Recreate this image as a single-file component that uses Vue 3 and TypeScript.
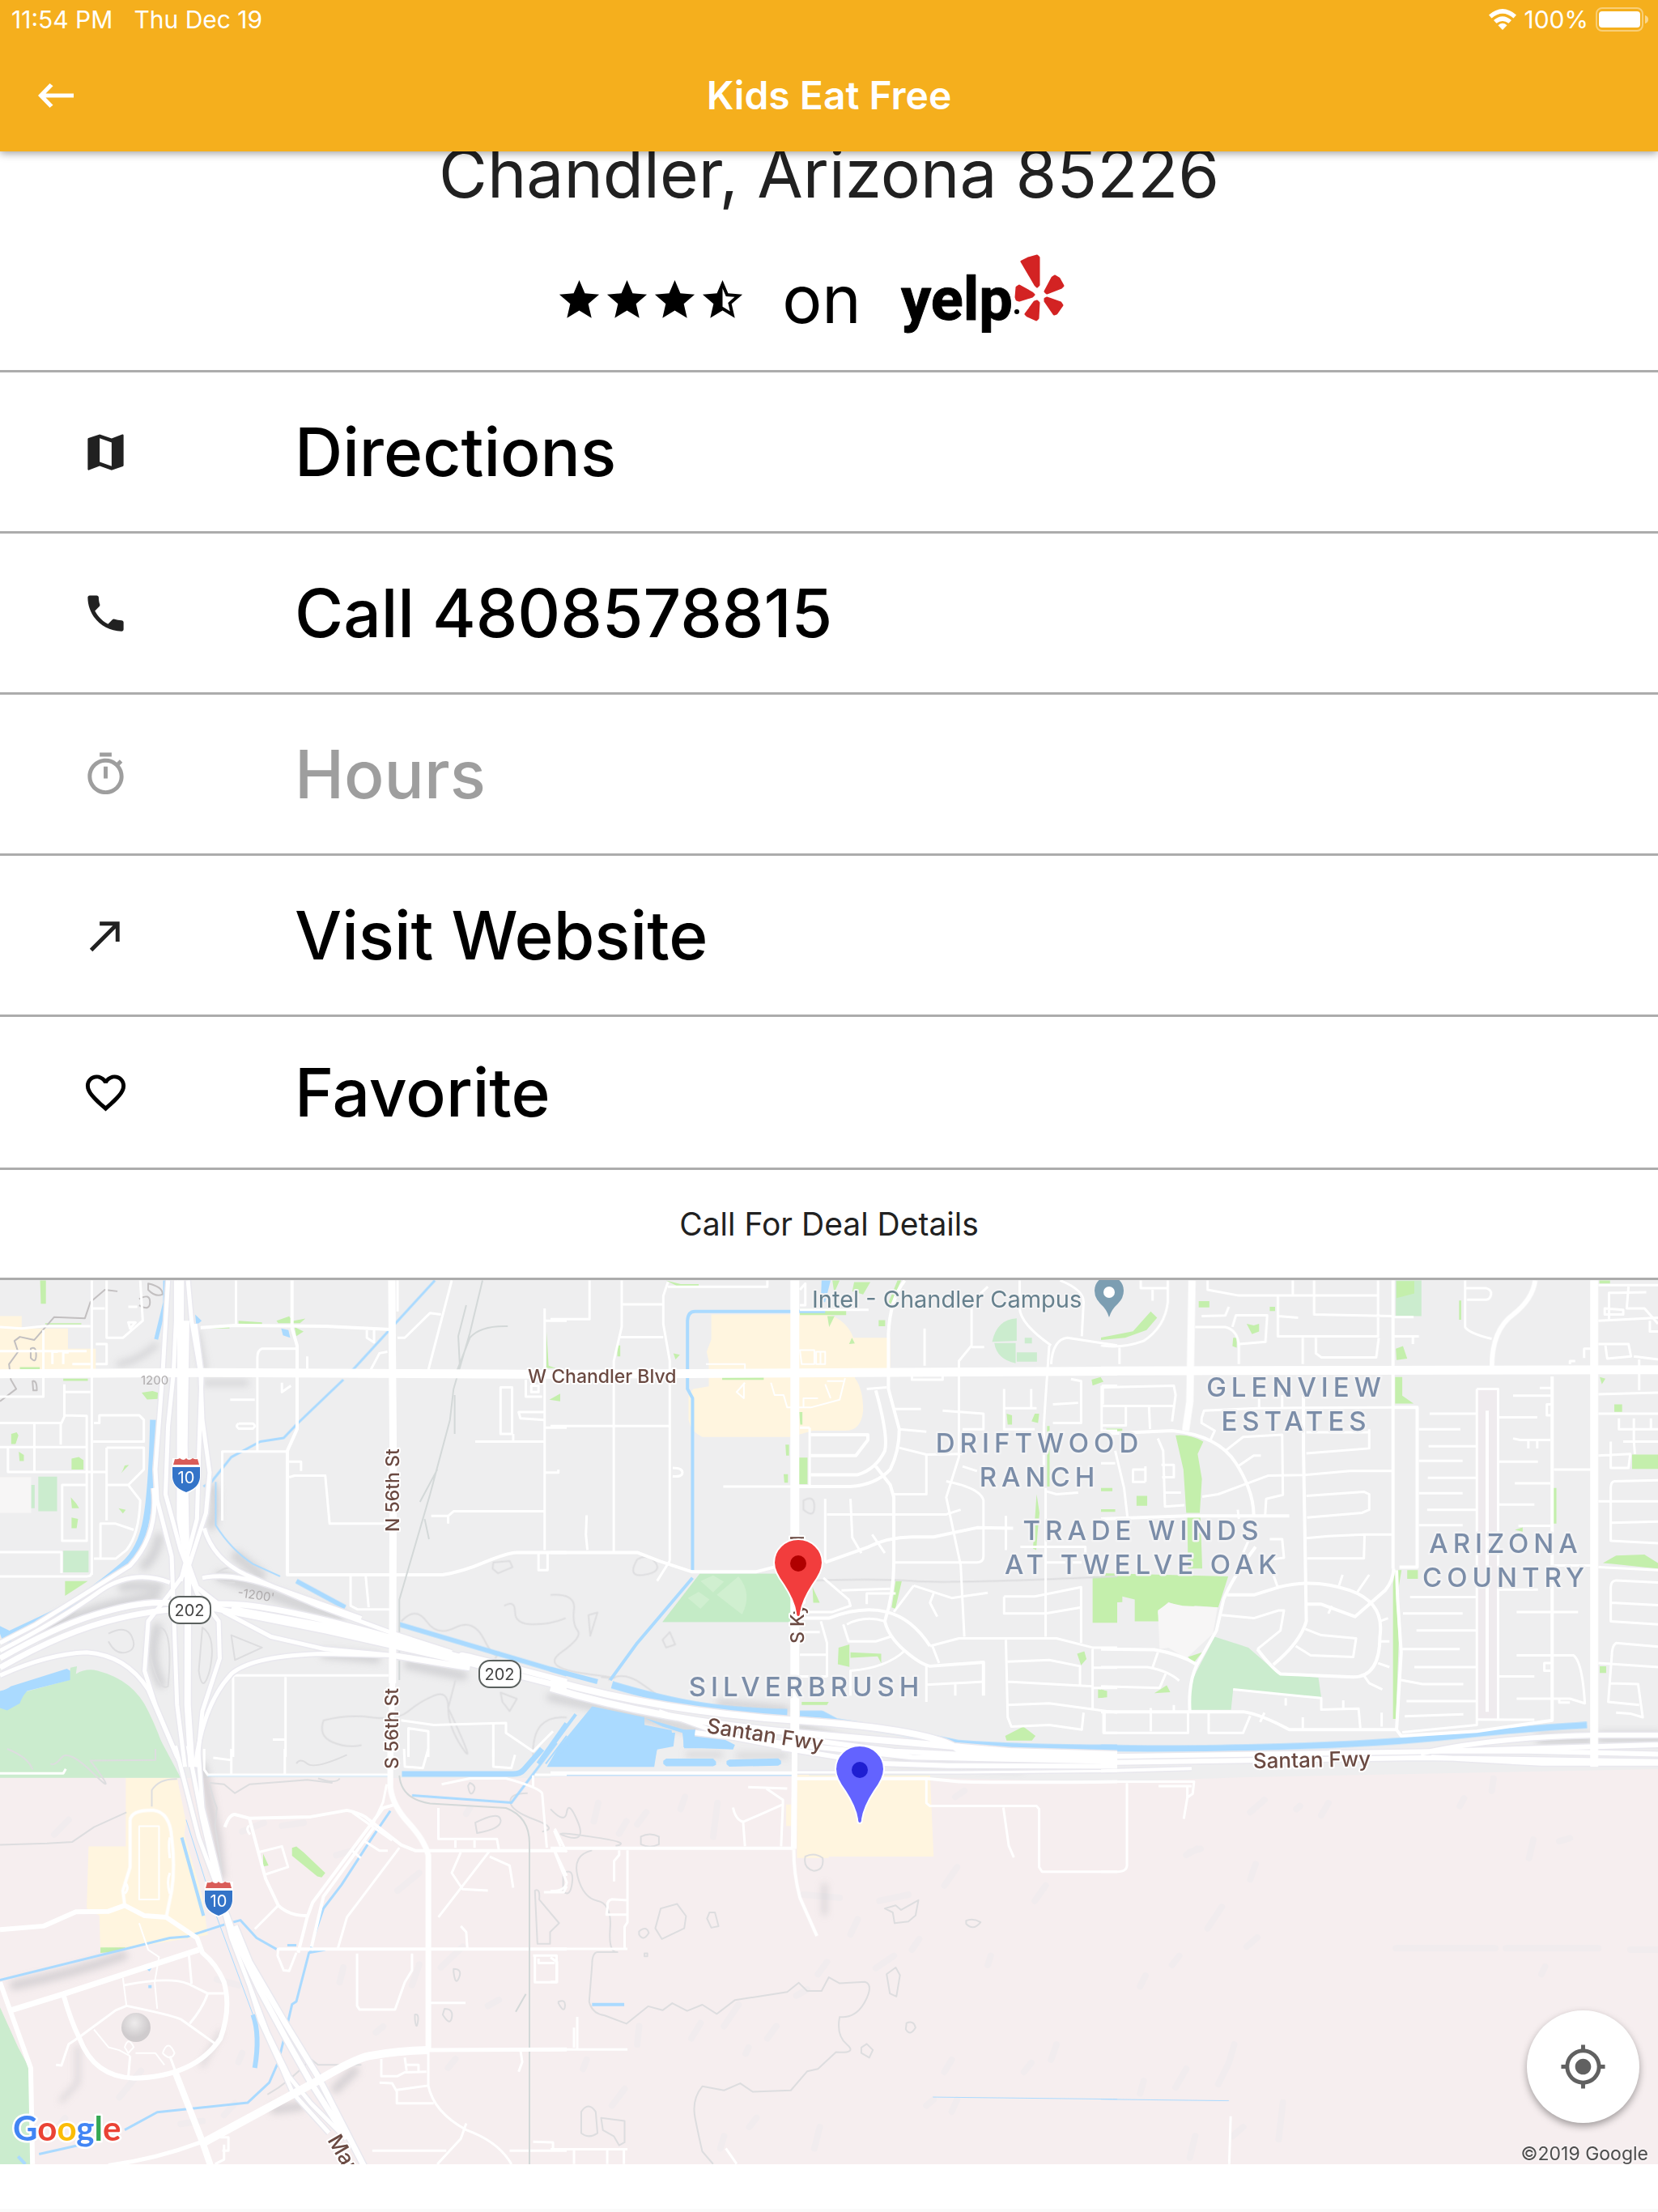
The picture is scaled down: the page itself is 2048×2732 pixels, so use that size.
<script setup lang="ts">
interface Action {
  label: string
  icon: string
  tone?: 'muted' | 'strong'
  short?: boolean
}

type TileKey = 'nw' | 'n' | 'ne' | 'sw' | 's' | 'se'

interface MapShape {
  tile: TileKey
  d: string
}

interface MapLine extends MapShape {
  w: number
}

interface AreaLabel {
  x: number
  y: number
  lines: string[]
}

const star = 'M12 17.27L18.18 21l-1.64-7.03L22 9.24l-7.19-.61L12 2 9.19 8.63 2 9.24l5.46 4.73L5.82 21z'
const halfStar =
  'M22 9.24l-7.19-.62L12 2 9.19 8.63 2 9.24l5.46 4.73L5.82 21 12 17.27 18.18 21l-1.63-7.03L22 9.24zM12 15.4V6.1l1.71 4.04 4.38.38-3.32 2.88 1 4.28L12 15.4z'
const stars = [star, star, star, halfStar]

const actions: Action[] = [
  {
    label: 'Directions',
    icon: 'M20.5 3l-.16.03L15 5.1 9 3 3.36 4.9c-.21.07-.36.25-.36.48V20.5c0 .28.22.5.5.5l.16-.03L9 18.9l6 2.1 5.64-1.9c.21-.07.36-.25.36-.48V3.5c0-.28-.22-.5-.5-.5zM15 19l-6-2.11V5l6 2.11V19z',
  },
  {
    label: 'Call 4808578815',
    icon: 'M6.62 10.79c1.44 2.83 3.76 5.14 6.59 6.59l2.2-2.2c.27-.27.67-.36 1.02-.24 1.12.37 2.33.57 3.57.57.55 0 1 .45 1 1V20c0 .55-.45 1-1 1-9.39 0-17-7.61-17-17 0-.55.45-1 1-1h3.5c.55 0 1 .45 1 1 0 1.25.2 2.45.57 3.57.11.35.03.74-.25 1.02l-2.2 2.2z',
  },
  {
    label: 'Hours',
    tone: 'muted',
    icon: 'M15 1H9v2h6V1zm-4 13h2V8h-2v6zm8.03-6.61l1.42-1.42c-.43-.51-.9-.99-1.41-1.41l-1.42 1.42C16.07 4.74 14.12 4 12 4c-4.97 0-9 4.03-9 9s4.02 9 9 9 9-4.03 9-9c0-2.12-.74-4.07-1.97-5.61zM12 20c-3.87 0-7-3.13-7-7s3.13-7 7-7 7 3.13 7 7-3.13 7-7 7z',
  },
  { label: 'Visit Website', icon: 'M9 5v2h6.59L4 18.59 5.41 20 17 8.41V15h2V5z' },
  {
    label: 'Favorite',
    tone: 'strong',
    short: true,
    icon: 'M16.5 3c-1.74 0-3.41.81-4.5 2.09C10.91 3.81 9.24 3 7.5 3 4.42 3 2 5.42 2 8.5c0 3.78 3.4 6.86 8.55 11.54L12 21.35l1.45-1.32C18.6 15.36 22 12.28 22 8.5 22 5.42 19.58 3 16.5 3zm-4.4 15.55l-.1.1-.1-.1C7.14 14.24 4 11.39 4 8.5 4 6.5 5.5 5 7.5 5c1.54 0 3.04.99 3.57 2.36h1.87C13.46 5.99 14.96 5 16.5 5c2 0 3.5 1.5 3.5 3.5 0 2.89-3.14 5.74-7.9 10.05z',
  },
]

// The map geometry is stored per tile; every tile spans 1568 x 1568 units.
const tiles: Record<TileKey, string> = {
  nw: 'translate(0 -11) scale(.44643 .38265)',
  n: 'translate(680 -11) scale(.44643 .38265)',
  ne: 'translate(1360 -11) scale(.43878 .38265)',
  sw: 'translate(0 579) scale(.44643 .3648)',
  s: 'translate(680 559) scale(.44643 .37755)',
  se: 'translate(1360 559) scale(.43878 .37755)',
}

const campus: MapShape[] = [
  { tile: 'nw', d: 'M0 145H60V185H188V250H265V318H0z' },
  { tile: 'n', d: 'M445 140H770Q820 160 838 215H940V318H842V345Q865 380 865 450Q860 515 815 515H725L665 535H420Q390 520 382 480V400L395 380L438 372V290L432 260 445 220z' },
  { tile: 'sw', d: 'M348 98H490L515 250 510 290 560 500 575 630 278 690 275 565 240 540 245 330H348z' },
  { tile: 's', d: 'M682 132H1050L1060 405H770V410H682zM652 235h14v70h-14z' },
]

const parks: MapShape[] = [
  { tile: 'nw', d: 'M106 663H158V775H106zM175 902H245V972H175zM86 690h10v75h-10z' },
  { tile: 'nw', d: 'M0 1380L190 1320 195 1280 213 1275 210 1300Q240 1280 270 1290Q370 1320 410 1420Q440 1490 460 1568H0z' },
  { tile: 'n', d: 'M413 977H665V1132H310z' },
  { tile: 'n', d: 'M1222 228Q1235 155 1290 152V225zM1228 232H1287V297Q1235 285 1228 232M1290 262h56v30h-56zM1312 215h20v18h-20z' },
  { tile: 'sw', d: 'M0 -40H440L500 98H0zM0 875L50 1010 85 1090V1406H0z' },
  { tile: 'ne', d: 'M320 1180L415 1215 500 1300 612 1312 620 1375 372 1350 366 1416H250Q245 1340 270 1290zM830 30h72v115h-72z' },
]

const greens: MapShape[] = [
  { tile: 'nw', d: 'M111 30h16v75h-14zM392 392l30-5 15 5v20l-30 2zM31 525l15-5 5 10-8 28h-12zM52 583l14 10v20h-12zM198 605l20-5 13 10v30h-33zM335 652l22-27-12 2-5 15zM196 730l15 20 8 15h-20zM198 795l18 5-4 30h-14zM328 765l20 5-8 12zM180 1000H243L180 1048z' },
  { tile: 'nw', d: 'M765 160l35-14 10 15 35-8-15 15h-60zM815 180l25 15-20 15zM1520 415l30-20v25zM660 160l65 5v6l-65-2zM575 180h60v5h-60zM175 347h68v7h-68zM55 310h55v6h-55zM1512 195l6 110 20 8h-26zM125 168h100v4h-100z' },
  { tile: 'n', d: 'M687 602h24v85h-24zM690 122h128v20H690zM766 145h20l-15 35zM908 158h18v20h-18zM955 1000h17l-18 90-10-5zM1500 985H1568V1135H1500zM797 1215l30-10v72l-32-8zM830 1230l85 5v30l-10-22-75 5zM695 1390h75l-5 10h-70zM1258 1500l50-30 34 30-10 15h-70zM1457 1235l20-8 6 25-15 20zM1515 1350l25 5v20l-25 3z' },
  { tile: 'n', d: 'M320 30l40 12h50v6h-60zM1262 460l15 5v30h-12zM1340 460h12l-3 30-18-5zM1374 500h7v195h-7zM1345 720l8 60-5 60-4 60-9-5 5-90zM1497 350l25-8 8 15-30 12zM725 1020l20 50h-18zM826 235l8-20 8 18zM475 343h115v8H475zM688 455h9v40h-6zM650 560h10v35h-8zM645 655h12v28h-10zM185 240h8v35h-8zM340 265l18 5-12 15zM780 30h20l-15 40zM840 35h45l-20 40-30-10zM960 30h10l-30 80h-8z' },
  { tile: 'ne', d: 'M210 530Q250 525 288 550L272 590 284 670 278 780H240L232 640zM243 795H280L285 960H245zM0 975L358 985 330 1085 265 1080 240 1090 190 1068 160 1100 165 1130H95V1060L60 1050V1068L25 1070V1130H0z' },
  { tile: 'ne', d: 'M828 965h18L832 1060 838 1200 830 1445h-8V1010zM828 342h20v60l32 25h-52zM830 250l20-8 12 40-30 5zM862 965h30v28h-30zM275 97h30v20h-30zM410 170l20 5 15-5v25l-20 8zM1413 942L1450 918 1530 915 1568 942V960L1440 945zM1495 592H1568V638H1495zM1445 430h22v24h-22zM100 725h30v32h-30zM1404 1275h18v22h-18zM1272 700h10v115h-10zM150 1362l35-25 10 22z' },
  { tile: 'ne', d: 'M475 115h15v14h-15zM1403 30h30v10h-30zM140 130l18 20-30 40-60 25-68 7v-8l90-20zM372 215h10v32l-12-5zM245 1245l40-15-25 35zM0 1350l15 5v18l-15 4zM1404 342l16 5-10 18zM1008 95h6v62h-6zM0 700h32v10H0zM0 768h40v9H0zM15 508h45v8H15zM832 32h50v40l-50 15zM1165 835l22-8v14z' },
  { tile: 'sw', d: 'M808 335l12-5 20 20 60 70-10 15-12-3-70-70zM728 355l15 40-15 3zM278 672h70l-20 14-50 5z' },
]

const schools: MapShape[] = [
  { tile: 'nw', d: 'M0 665H86V780H0z' },
  { tile: 'ne', d: 'M160 1095L190 1070 230 1080 328 1085L315 1170 240 1250 190 1215 165 1220z' },
]

const lakes: MapShape[] = [
  { tile: 'nw', d: 'M0 1355Q20 1350 30 1340L185 1283 194 1290V1320L75 1355Q60 1375 55 1395L20 1418 0 1410zM0 1145L25 1160 32 1195 10 1203 0 1170zM540 140l18 20-15 15zM778 185l20 5 5 25-20-8z' },
  { tile: 'n', d: 'M115 1405L260 1440V1465L335 1482 340 1520 295 1540 287 1600H-10L20 1540zM260 1442L400 1490 510 1530 505 1540H370L365 1490 310 1470zM750 30h25l-15 70h-12z' },
  { tile: 's', d: 'M80 0H345L340 45 295 55 285 107H0zM368 -10H430L510 40 505 55 368 48zM320 85H450l8 10v10l-8 5H320l-8-8v-10zM495 88l135-4 8 8v10l-8 6-135 3-8-8v-10z' },
]

const canals: MapLine[] = [
  { tile: 'nw', w: 5, d: 'M457 30V100L432 220' },
  { tile: 'nw', w: 8, d: 'M424 480Q420 700 405 800Q390 900 340 950Q230 1060 130 1115L20 1175' },
  { tile: 'nw', w: 3, d: 'M1203 30L975 320M950 350L820 495 785 538 720 550 640 600 585 680 563 695' },
  { tile: 'nw', w: 2, d: 'M597 680V820Q640 900 700 945L775 985' },
  { tile: 'nw', w: 6, d: 'M820 1000L955 1085M1105 1140L1568 1300' },
  { tile: 'nw', w: 6, d: 'M1568 1460L1490 1590' },
  { tile: 'nw', w: 2, d: 'M1568 1500L1510 1590' },
  { tile: 'n', w: 4, d: 'M760 130H400Q380 130 379 160V380L393 410V965M393 990L240 1200 165 1320M70 1430L0 1540' },
  { tile: 'n', w: 6, d: 'M0 1285L130 1325' },
  { tile: 'n', w: 9, d: 'M170 1335Q300 1380 400 1400T655 1425M690 1430H750L790 1455 960 1485 1130 1525Q1300 1540 1568 1540' },
  { tile: 'ne', w: 8, d: 'M0 1538Q200 1545 500 1535T1000 1500Q1200 1475 1368 1465' },
  { tile: 'sw', w: 7, d: 'M1500 0L1450 70Q1440 85 1420 85H1112' },
  { tile: 'sw', w: 3, d: 'M1540 -20L1415 182L1140 157' },
  { tile: 'sw', w: 3, d: 'M0 783L470 640 520 635 620 595 665 580 710 640 765 678M795 665h25M900 680L855 690 820 855 808 865 790 960 770 1060 745 1130 685 1198 435 1230 345 1290M260 1330L108 1372M1080 210L1030 300 945 460 895 540 870 630 858 690' },
  { tile: 'sw', w: 4, d: 'M503 300L563 565M50 1380l20 26M410 750l8-15M415 800v10' },
  { tile: 'sw', w: 1, d: 'M515 240L600 570 700 900M575 92H1080' },
  { tile: 'sw', w: 6, d: 'M700 900Q720 970 705 1080' },
  { tile: 's', w: 4, d: 'M115 889H204' },
  { tile: 's', w: 1, d: 'M0 140H680M715 137H1050M1058 1192L1568 1199' },
  { tile: 'se', w: 1, d: 'M0 1199L360 1204' },
]

const contours: MapShape[] = [
  { tile: 'nw', d: 'M0 420L45 380 30 350 25 300 50 260 40 225 55 212 95 222 150 148 235 152 250 100 290 60 325 65M410 40Q450 50 450 75 430 85 410 60zM385 90Q415 70 415 100T385 110M85 250q15-10 15 20t-15 10zM90 355q12-5 12 30h-10z' },
]

const faintContours: MapShape[] = [
  { tile: 'nw', d: 'M650 1005Q590 1010 600 975 640 935 700 980M300 1170Q350 1140 365 1180T350 1230 300 1195M640 1175L725 1215 650 1255zM440 1150Q480 1150 465 1340Q440 1360 415 1240M560 1150Q600 1180 580 1290 560 1370 550 1290z' },
  { tile: 'nw', d: 'M1110 1130Q1150 1080 1180 1130T1260 1150 1340 1190 1380 1230L1370 1250M1000 1530Q960 1540 920 1520T895 1450Q960 1430 1030 1440T1130 1420 1200 1370 1240 1410 1280 1540 1240 1410L1260 1320M1365 940l45-5 8 20-40 20-15-15zM1395 1080q30-20 30 20t50 40 90-20M1385 1360l45 20-20 40-20-30zM1475 1568Q1470 1430 1568 1440' },
  { tile: 'n', d: 'M0 1045Q70 1040 65 1090T75 1160 30 1230 100 1300 140 1310M240 930q30-20 50 10t-30 40-20-50M105 1110l25-8-20 75zM310 1190l20-25 15 40-25 10zM160 1320Q200 1290 250 1330T330 1400M700 740q30-20 30 20t-30 10zM685 1000Q900 990 1000 1000T1568 985' },
  { tile: 'sw', d: 'M0 325L130 320 200 315 260 265 350 215M420 195V140Q440 100 490 102M20 0Q80 30 90 70M140 50Q150 60 170 30T260 85 250 40L430 38V0M580 115L620 120 650 150 690 120 780 112 850 105 920 115M580 120Q590 170 600 200L595 260 615 420M820 50Q830 30 850 50T960 20M880 100Q930 120 940 100M1300 115q20 10 10 30t-15-20zM1315 250Q1380 210 1385 240T1320 285zM1480 480q15-10 12 30l55 80-25 30v40h-35l-5-130zM1255 745q25 0 15 30t-15-20zM1230 880q25 0 20 30t-25-10zM1148 900q12-5 8 25t-8-10zM1460 150Q1410 150 1412 180T1480 240 1500 280M740 1170Q800 1130 860 1050L880 1070 1000 1070' },
  { tile: 's', d: 'M0 250Q40 300 45 260T75 290 45 340 110 340 180 370M115 385Q60 400 75 470T130 550 165 640 185 718H130Q115 720 115 760L107 880Q115 920 150 925L210 952 270 895 310 908 337 885 378 910 420 890 460 920 510 875 580 862 655 848 687 818 710 845 750 845 770 800 800 820 870 815Q895 825 870 880T800 930Q790 990 820 1020T790 1045L740 1100 710 1108 665 1170 560 1175 525 1147 480 1170 420 1157Q390 1200 400 1260T420 1370L450 1411' },
  { tile: 's', d: 'M305 575L350 560 375 600 370 640 308 675 290 640zM440 588h15l10 45-20 5-12-30zM925 575l30-10 15 15 48-32-8 50-20 20-38 5-5-35zM930 790l25-22 12 25-10 70-18-10zM250 340q25-15 50 0v25q-25 15-50 0zM705 405q25-15 48 5q5 40-25 42q-30-10-23-47zM1150 615q20-10 40 5q-20 30-40 5zM985 950q20-10 25 15q-15 30-27 5zM860 1030l15-12 17 20-10 25-22-15zM245 650q20-20 27 5q-15 30-27 5zM85 1240q20-35 40 0l5 70q-25 20-45 0zM140 1260l30 5 35 5v70l-15 10-15-30-30-20zM35 460q30-20 25 30t-25 30zM260 722h8v10h-8zM22 880q20-10 18 15t-18-10z' },
]

const railways: MapShape[] = [
  { tile: 'nw', d: 'M1335 30L1300 200 1255 380 1245 480 1190 720 1130 960 1105 1060V1320M1290 110L1268 210 1272 300M1405 178Q1330 175 1300 215L1265 320M1258 400V525M1162 745L1210 640M1175 800L1187 865' },
  { tile: 'sw', d: 'M1105 90Q1110 170 1190 185L1400 200Q1465 230 1465 320V1406M1455 830L1427 890' },
]

const shades: MapLine[] = [
  { tile: 'nw', w: 12, d: 'M440 860Q430 920 400 950M120 1170Q240 1080 430 1050M340 1020Q380 1010 440 1020' },
  { tile: 'nw', w: 14, d: 'M610 985Q700 1020 780 1055T940 1110M655 920L720 980' },
  { tile: 'nw', w: 12, d: 'M435 1150Q410 1250 445 1330M590 700Q600 780 585 820M1130 1270L1280 1305M900 1235L1040 1250' },
  { tile: 'nw', w: 7, d: 'M330 300Q380 290 430 240M570 360H680M545 200Q560 280 565 320M200 1090L60 1180' },
  { tile: 'n', w: 10, d: 'M0 1375L120 1405 430 1490M690 1470L850 1530M470 1395L650 1415' },
  { tile: 's', w: 6, d: 'M380 72H470M520 75H650M950 95L1300 118M758 500V590' },
  { tile: 'se', w: 14, d: 'M1240 20H1370M1410 15H1568' },
  { tile: 'sw', w: 12, d: 'M560 60L600 300 610 430M40 800Q200 760 340 700M930 1150L980 1090M760 1220L830 1210' },
  { tile: 'sw', w: 5, d: 'M215 1010V1130L170 1190M610 960L560 1070' },
]

const flecks: MapShape[] = [
  { tile: 's', d: 'M120 290l12-60M190 330l20-40M450 340l12-110M240 300l25-40M360 250l12-40M1090 500l35-60M1120 210l25-20M1340 550l30-50M910 550l80-20M830 660l20-50M1000 710l20-35M1210 760l8-30M900 770l50-40M740 790l25-40M240 1020l5-60M390 1000l25-50M480 960l40-70M600 1000l25-40M540 1050l8-20M1090 1110l20-40M1310 1110l20-30M1385 1070l15-50M170 1220l35-55M730 1360l15-70M470 1360l10-40M550 1290l20-30M1040 1220l20-20M1110 1240l15-40M700 530l100 10M680 860l30-20M90 1100l10-30' },
  { tile: 'se', d: 'M300 640l40-70M620 270l20-40M420 260l40-40M200 760l20-30M410 700l30-30M420 480l15-50M250 390l30-10M110 830l15-35M330 1150l30-70 15-60M210 1160l30-60M110 1180l10-40M250 1390l15-70M500 1330l12-120M830 705H1110M1140 705H1400M1490 710H1568M1290 355l30-10M1100 190l5-40M1010 240l12-25M1205 410l12-60M1240 790l10-25M370 1320l30-30M240 400l30-20M550 250l10-10' },
  { tile: 'sw', d: 'M150 290l40-50M670 280l60-30M540 520l30-40M600 780l60 20M330 1180l60-90M930 360l60-20M1100 480l60-60M1220 740l60-70M940 790l10-50M1040 960l20-20M1240 1080l20-30M780 260l60-10M1140 800l20-70M660 1060l10-30M1350 870l30-20M1290 220l10-20M500 1270l60-10M160 1280l20-30M620 1240l30-40' },
]

const localRoads: MapLine[] = [
  { tile: 'nw', w: 3, d: 'M254 30V980M0 985H240Q254 985 254 970M0 180L60 185 120 178H250M0 258H240M295 30V215H340L395 160 388 30M254 120H290M120 190V405H0M178 365V465L240 467V870H172V690H240M0 490H170L180 465M168 490V560M95 490V645M0 568H240M22 570V648H295M260 490H275V465H385L398 480V550H258M295 570H398V640L355 690 388 740Q385 850 350 900L320 928H260M295 570V805M298 690H355M278 925V815H320L370 835M0 907H170V975M265 235H295V300H265M355 115H380M355 165H375L360 185zM145 300V260H160M175 300V262H190M200 300H250M180 390H250' },
  { tile: 'nw', w: 3, d: 'M653 30V170M820 250H725Q712 255 712 280V578M615 805V582H795M637 415H705M660 492H700Q710 500 700 508H660Q650 500 660 492M800 615H833V645M800 665L815 660H900L912 815H1075M970 985V1080L990 1092H1080M1012 985L1020 1085M1075 1305H645V1568M790 1310V1568M755 1512H790M780 360V390L805 370M1015 190V215L1035 230V190M850 275V315' },
  { tile: 'nw', w: 4, d: 'M555 182L650 175 900 178 1080 188M808 30V185L822 240V510L795 580V980H1225Q1280 970 1340 940T1430 908H1568' },
  { tile: 'nw', w: 3, d: 'M1100 215H1120L1190 135 1220 140M1250 30L1185 320M1072 260L1050 265 1025 320M1100 30V130M1507 120V900M1507 160H1568M1385 375H1417V525H1385zM1420 525V548M1315 550H1505M1507 505H1568M1505 480L1440 475 1435 455H1505M1505 775H1255L1240 790H1193M1240 790V815M1490 910V965H1515V910M1507 650H1545V640M1110 1450L1200 1465 1400 1458V1490L1475 1550 1530 1485M1130 1568V1475L1185 1485V1568M1365 1460V1568M1455 350V405H1500M1470 370h20v20h-20z' },
  { tile: 'n', w: 3, d: 'M108 30V155H0M197 30V180L175 290V905M330 935V290L312 170V80L325 35M200 107H310M192 213H312M0 500H330M325 50H600V30M330 935L295 1000M338 635Q365 635 365 650T338 662M100 788L98 850 102 900M478 695H665M717 505V690M690 505H717M875 380L930 375M950 445H1025M965 510L1040 518M965 570L1040 592 1140 590M1040 595V720H950M760 735V940M765 785H1095L1135 770M830 735L835 860 860 910M890 850L925 910M950 940H1180Q1198 940 1198 920V740Q1190 700 1095 678M1035 185V305M955 1040H875V1075M805 1030L940 1025M755 990L825 1060 830 1080 780 1100H690' },
  { tile: 'n', w: 4, d: 'M0 908H240L300 935 390 970H570L620 955M687 695H830Q900 690 940 640 965 580 965 510L935 380V200Q940 90 980 30M720 657H850Q900 640 925 580 935 530 900 385M720 595H845L878 545V528H720M900 630L940 690 950 730V940Q950 1040 925 1130 935 1180 980 1225T1050 1275L1198 1262V1370M690 1120H770Q860 1080 930 1100T1050 1210M760 940L880 890Q930 860 1000 858H1060L1180 828 1280 830' },
  { tile: 'n', w: 3, d: 'M1050 1210L1130 1185H1400L1500 1215H1568M1055 1205L1075 1265M1130 330V600L1095 730 1135 950 1145 1180M820 1140Q870 1110 925 1130M810 1140L825 1195H900L940 1180M980 1225Q930 1280 830 1290V1370M748 1130L765 1200V1310M690 1165H745M690 1238H762M690 1308H765M1005 1015L950 1100M1005 1015L1110 1055 1210 1038M1060 1040L1050 1070 1070 1115M1040 1275V1390M1040 1335L1198 1325M1120 1330V1370M1260 1190L1265 1440 1275 1470 1380 1465 1470 1480 1475 1425M1265 1260L1380 1255 1465 1275V1335M1265 1325L1500 1340M1265 1400L1380 1395 1568 1425M1500 1220V1415M1530 1425V1490H1568M1500 1280H1568M1500 1345H1568' },
  { tile: 'n', w: 3, d: 'M1255 1050H1340L1468 1020V1200M1255 1050V1105H1370L1468 1085M1370 700V1180M1380 240Q1370 400 1365 500V700M1385 300Q1390 220 1430 215L1568 240M1298 30V120Q1300 170 1385 240M1130 330V290L1165 240V100L1210 50M1410 30Q1475 60 1475 100L1470 210M1165 245H1200M1000 340V350H1085V335M1440 348L1468 355V490H1390M1255 380V510H1340M1330 380V440M1255 442H1345M1390 430L1460 425M1085 450L1198 460V510H1140M1525 370H1568M1525 370V515H1568M1140 630L1180 645M1370 710L1400 720 1460 715M1260 790V900M1300 890H1480V950M1370 940H1470M690 125H880M690 60L705 40V110H690' },
  { tile: 'n', w: 2, d: 'M430 300H538V325M610 360L620 400H645L655 440 720 440 800 415 815 345M690 255H730V300H695zM735 260h25v40h-25zM747 260v40M760 365L775 410M765 355H810M538 360L515 390 535 410V360M700 440V410H740' },
  { tile: 'ne', w: 3, d: 'M0 240Q60 250 120 225 180 180 188 100V30M112 30V55H185M145 60V95M52 245V300M300 30V60L385 78H780M540 30V75M600 30V140L820 145M498 80V210H780V30M498 145L555 150M605 215V265L620 278H775L782 215M568 215V300M265 180H350Q385 190 388 240V300M370 180L380 142H468L463 228 390 235M283 145L350 143 360 115M825 148H880M825 210H895M878 210V235M1025 30V180Q1035 200 1100 218M1025 55H1085Q1100 60 1098 75T1085 92H1030' },
  { tile: 'ne', w: 3, d: 'M5 430V375L205 370 210 400 200 485M0 435H205M70 435V498H0M135 435L138 510M283 475L290 450 440 442 820 440M283 475V490L320 515 308 545M445 410V442M510 400V442M350 580L400 535 510 528 512 722 465 735 462 790M388 628L430 595H450M285 728L330 720 470 660 570 658 700 645H820M578 588L755 572V510M578 520H755M578 725L740 712 755 720V770L735 780 580 795M578 862L640 855 740 850H818M742 850L740 927H580' },
  { tile: 'ne', w: 4, d: 'M0 525L200 515Q330 530 380 620T430 790M0 800L240 790H530M570 400V580L578 1130Q560 1200 485 1270M355 1045H430L500 1020Q600 990 700 1030T785 1180Q785 1310 710 1310L505 1300Q480 1280 440 1220M822 30V960M822 440H890V955H840M435 890Q370 990 345 1060L325 1160 270 1270Q245 1330 250 1420M0 1220L150 1222Q220 1235 270 1270M0 1422H400Q450 1430 530 1480H830M832 965L835 1060 845 1230 832 1480 845 1500 1058 1485 1270 1450V340M578 1075H620L715 1115 800 1030Q822 1000 824 960' },
  { tile: 'ne', w: 3, d: 'M440 1220L505 1160 515 1095 500 1095 430 1120 340 1110M575 1155L620 1175 718 1185 710 1245 590 1240 548 1210M640 1105L650 1080M670 1015L680 980M722 1035L755 980M785 1130L808 1120M785 1195H812M780 1265L812 1278M740 1305L755 1330 792 1350M385 770L388 800M415 870L400 910M475 865H510L515 925 480 930M485 980L498 1022M40 580L65 700 75 800M125 630V680M160 540L175 580 180 760 235 755M88 640H125M90 640V680H125M170 625H205V665H172M180 715H225M0 620H40M160 1230L145 1280M0 1278H130Q190 1290 220 1322M182 1300L165 1345 0 1340M10 1425V1490H245V1425M140 1410V1485M205 1400V1422' },
  { tile: 'ne', w: 3, d: 'M303 1425V1490H400L420 1435M460 1425L448 1455M568 1440V1480M372 1350L620 1378V1415L725 1412 730 1475M520 1378V1402M682 1385V1410M790 1425V1470M848 1488L1058 1465V380M1058 380H1118V1445M925 460H1055M895 510H1012M922 565H1055M895 612H1018M920 667H1055M895 717H1018M918 770H1055M895 820H1018M870 1052H1055M850 1105H1018M888 1160H1055M848 1220H1010M882 1278H1055M845 1320L905 1333H1020M860 1388H1055M855 1437L1020 1430' },
  { tile: 'ne', w: 3, d: 'M1120 472H1228M1160 402H1268M1235 377H1268M1120 615H1230M1160 540L1180 545H1265M1203 548V572M1228 548V572M1165 685H1265M1120 753H1220M1175 822H1265M1120 1028H1230M1170 1100H1343M1170 1240H1330Q1355 1260 1362 1395L1320 1380H1170M1120 1308H1220M1058 1447L1220 1448M1275 640H1380M1275 950H1380M1360 280V250H1380M1320 300V290H1335M1268 430H1255V465H1268M1268 1265H1248V1290H1265M1290 1380V1392H1320' },
  { tile: 'ne', w: 3, d: 'M1400 45H1568M1400 160L1568 150M1430 155V70H1450L1535 68M1485 50L1480 120H1530L1568 170M1418 120V140H1470V125zM1545 160V195H1568M1400 235H1485L1492 275 1425 282 1420 240M1500 275L1568 285M1515 285V385M1400 397L1568 392M1400 460H1568M1458 475V510H1568M1500 475V550L1503 590M1548 475V510M1470 550H1568M1435 550V635H1485L1490 590 1400 595M1568 675L1445 678Q1435 680 1435 700V870L1568 878M1400 743H1568M1438 812L1568 808M1400 955L1568 965M1568 1005L1450 998Q1435 1000 1435 1020V1130L1568 1140M1438 1070L1568 1078M1400 1265L1568 1278M1568 1212L1450 1200Q1438 1210 1438 1240L1428 1390 1515 1400M1435 1330L1512 1333 1525 1440 1490 1428 1450 1425' },
  { tile: 'ne', w: 4, d: 'M1087 450V1422' },
  { tile: 'sw', w: 2, d: 'M340 775L350 870M385 590L410 680 440 705 428 790 435 880M360 1040L330 1020 300 1010 260 950M375 1030H430L455 1070M345 1010q10-40 25 0l-15 20zM450 1030q15-50 33 0q-10 30-33 0M385 262V510H440V262z' },
  { tile: 'sw', w: 3, d: 'M345 800Q470 770 520 795L575 828H620M575 828Q560 880 525 930M523 700L530 795M350 870Q470 900 500 915L595 998M350 870L320 885 220 975 190 1000 170 1072 155 1070M355 1110L360 1040M470 1040L485 1090M470 300Q465 320 470 370M470 420Q460 450 470 490M345 450Q360 470 345 490M690 260Q678 270 692 290' },
  { tile: 'sw', w: 3, d: 'M715 350L780 330 797 400 735 425M770 530L705 610M820 690L800 752 785 750 768 700 770 675M1105 335L960 570 935 675M975 215L1085 310M1070 120L1060 180 1030 260M975 345L998 370M1005 310L1050 345H1073M1185 860H1288M988 693V870L995 883H1093L1120 790 1140 750V693M1275 600L1290 620 1293 675M1213 200V305H1375L1380 340M1260 310V335M1313 310V335M1275 350L1250 420 1280 475 1350 480M1355 345L1213 570M1355 365L1410 395 1420 470M1222 120L1300 100H1400Q1490 130 1500 150L1513 335M1535 270L1568 350M1535 345L1568 430' },
  { tile: 'sw', w: 4, d: 'M622 265Q635 220 650 222L690 235 860 230 960 208Q990 215 1010 230L1110 325 1150 345H1568M690 235L715 350 735 440 770 530Q800 565 850 565M1088 190L1060 200 865 520 850 570 825 690M1035 265L895 500 862 670M770 678H1568' },
  { tile: 'sw', w: 3, d: 'M1055 1050V1108H1100L1120 1095 1180 1093M1120 1045L1125 1090M1125 1070H1158V1093M1050 1130L1085 1132 1098 1160V1200H1200M1098 1155L1185 1140M1440 1020L1445 1060 1435 1093M1185 1020V1140Q1200 1230 1290 1290Q1380 1330 1415 1406M1290 1268L1275 1320 1210 1406M1030 1360H1235M1410 1360H1568M1475 700H1540V790H1480V700M1490 710V725H1535M0 83H175L182 68M565 0V70L575 88H1080M640 0V88M788 0V88M590 30L640 38M1480 88H1568M1475 90V130M610 1315H632V1360H615M620 1340V1390L595 1406M1118 0L1120 60 1170 65 1185 0M1365 0V60L1415 65 1425 20M1505 485H1560L1568 465M1475 1330L1530 1332V1360' },
  { tile: 's', w: 3, d: 'M547 178L655 183M597 183L643 220V235L638 372M505 245Q512 285 533 292L643 235M533 292L538 372M213 385V620L205 635V705M190 385V400L176 420V487M213 548L170 545Q155 550 158 570L155 595H213M0 707H213M0 1036H213M74 930V1034M65 965V1030M10 320L28 372M10 385L45 490Q40 520 0 518M0 1363H213M65 1363V1411M157 1365V1411M203 1365V1411M485 1360L515 1411M0 735L18 750V815H0M1040 150V230L1050 240H1345L1352 250V440L1360 455H1568M1253 245L1268 370 1282 408' },
  { tile: 's', w: 4, d: 'M0 378H670M682 150H1040L1130 160Q1300 165 1568 160M0 132H680' },
  { tile: 'se', w: 3, d: 'M0 160H262L258 200 243 212 233 282M162 175H255M243 175V210M73 165V430Q75 455 45 455H0M365 1255L361 1411' },
]

const mainRoads: MapLine[] = [
  { tile: 'nw', w: 11, d: 'M0 331L560 327 1568 333' },
  { tile: 'n', w: 11, d: 'M0 333L1568 323' },
  { tile: 'ne', w: 11, d: 'M0 322L1568 318' },
  { tile: 'nw', w: 9, d: 'M1084 30L1088 620 1086 1330' },
  { tile: 'nw', w: 7, d: 'M1086 1330L1080 1568' },
  { tile: 'sw', w: 7, d: 'M1080 0V130Q1085 190 1130 250T1185 360V1020' },
  { tile: 'n', w: 11, d: 'M676 30V1540' },
  { tile: 's', w: 7, d: 'M676 0L673 380' },
  { tile: 's', w: 4, d: 'M673 380Q672 460 690 540L737 665' },
  { tile: 'ne', w: 9, d: 'M256 30L250 420 238 515' },
  { tile: 'ne', w: 10, d: 'M1388 30V1600' },
  { tile: 'ne', w: 6, d: 'M1222 30Q1215 90 1160 140Q1100 190 1100 310' },
  { tile: 'sw', w: 7, d: 'M30 885L175 830 550 680' },
  { tile: 'sw', w: 6, d: 'M175 830Q195 920 220 980Q260 1110 370 1115Q540 1110 610 980Q640 880 620 790Q600 730 560 690L545 640 460 570 400 565 345 530 300 550 210 552 120 600 0 612M0 790L85 1080 90 1406' },
  { tile: 'sw', w: 4, d: 'M360 240Q365 205 425 208Q470 215 475 300Q485 400 475 480L460 570M360 240V400L340 480 345 530' },
  { tile: 'sw', w: 8, d: 'M485 1095L560 1330 585 1420' },
  { tile: 'sw', w: 10, d: 'M560 1335L870 1130Q980 1050 1020 1040 1100 1022 1185 1020' },
  { tile: 'sw', w: 5, d: 'M300 1410Q430 1390 560 1330M1185 1020L1568 1018' },
]

const freeways: MapLine[] = [
  { tile: 'nw', w: 5, d: 'M465 30L450 330 430 640 435 740 475 920 480 1080 490 1400 512 1600M487 30V160L480 330 465 500 458 720 500 900 545 1040 605 1130 608 1250 560 1420 545 1600M520 30L530 160 555 330 560 480 580 650 570 780 520 960 470 1040 410 1130 400 1290 430 1400 495 1580M540 170L558 330 550 600 545 800 500 1000' },
  { tile: 'nw', w: 8, d: 'M500 30L498 800 520 950 519 1400 530 1600M515 160L510 560 515 900' },
  { tile: 'nw', w: 5, d: 'M520 940L545 1020 620 1100 750 1180 900 1220 1088 1240M565 830Q590 930 680 980L880 1080 1090 1170 1250 1230M0 1225Q160 1130 280 1030Q370 960 470 1005M0 1305Q130 1235 240 1230Q350 1240 410 1350L490 1568M540 1600Q560 1400 640 1300Q700 1240 900 1235L1088 1240M425 700Q440 850 360 950L100 1140 0 1200M560 990Q640 970 760 1020L1000 1120M545 1020L600 1070' },
  { tile: 'nw', w: 7, d: 'M0 1250Q150 1150 260 1110T440 1070 640 1075 1088 1185 1300 1250 1568 1325M0 1280Q180 1160 330 1120T600 1090L900 1160 1300 1265 1568 1345M640 1090L900 1145 1200 1225M1088 1240L1300 1280' },
  { tile: 'n', w: 8, d: 'M0 1320Q300 1420 680 1450T1130 1545L1568 1560M0 1345Q300 1450 680 1490T1568 1580' },
  { tile: 'n', w: 5, d: 'M300 1420L500 1505 680 1545' },
  { tile: 's', w: 6, d: 'M400 0L680 40 1000 80 1568 95M690 20L950 60 1200 75 1568 75M640 50L900 100 1100 108 1568 110' },
  { tile: 's', w: 3, d: 'M680 130H1100L1568 125' },
  { tile: 'se', w: 6, d: 'M0 78L900 62 1568 40M0 98L900 82 1568 95M930 80L1240 100 1568 100M900 68Q1100 15 1390 8H1568M950 60L1200 60 1568 70' },
  { tile: 'se', w: 4, d: 'M0 125L255 117' },
  { tile: 'sw', w: 5, d: 'M485 -10L550 300 605 480M520 -10L560 240 600 450M548 0L560 200 612 460M605 480L640 640 690 800 720 920 780 1080 810 1165 910 1300M690 800L740 960 800 1110 860 1200 950 1310' },
  { tile: 'sw', w: 7, d: 'M620 540L650 640 720 820 800 1000 860 1130 960 1320M650 600L690 720 790 930 880 1110 1010 1420' },
]

const areaLabels: AreaLabel[] = [
  { x: 1284, y: 213, lines: ['DRIFTWOOD', 'RANCH'] },
  { x: 1601, y: 144, lines: ['GLENVIEW', 'ESTATES'] },
  { x: 1412, y: 321, lines: ['TRADE WINDS', 'AT TWELVE OAK'] },
  { x: 1860, y: 337, lines: ['ARIZONA', 'COUNTRY'] },
  { x: 996, y: 514, lines: ['SILVERBRUSH'] },
]

const stateShields = [
  { x: 208, y: 390 },
  { x: 591, y: 469 },
]

const interstateShields = [
  { x: 213, y: 220 },
  { x: 253, y: 743 },
]

const pins = [
  { x: 986, y: 320, fill: '#f23d3d', dot: '#b00000' },
  { x: 1062, y: 575, fill: '#6363ff', dot: '#1f1fd1' },
]
</script>

<template>
  <div class="page">
    <header class="app-bar">
      <div class="status">
        <div class="status-side">
          <span>11:54 PM</span>
          <span>Thu Dec 19</span>
        </div>
        <div class="status-side status-right">
          <svg class="wifi" viewBox="0 0 34 26" aria-hidden="true">
            <path d="M0 7.5Q17-7.500 34 7.500L30.500 11.500Q17 0 3.500 11.500z" />
            <path d="M6 14Q17 4.500 28 14L24.500 17.800Q17 12 9.500 17.800z" />
            <path d="M11.500 20.200Q17 15.500 22.500 20.200L17 26z" />
          </svg>
          <span>100%</span>
          <svg class="battery" viewBox="0 0 66 30" aria-hidden="true">
            <rect class="battery-shell" x="1" y="1" width="57" height="28" rx="7" />
            <rect x="4" y="5" width="51" height="20" rx="4" />
            <path class="battery-nub" d="M61 10q4 1 4 5t-4 5z" />
          </svg>
        </div>
      </div>
      <div class="nav">
        <button class="back" type="button" aria-label="Back">
          <svg viewBox="0 0 44 30" aria-hidden="true">
            <path d="M44 12.500H9.500L18.500 3.200 14.500 0 0 15 14.500 30 18.500 26.800 9.500 17.500H44z" />
          </svg>
        </button>
        <h1>Kids Eat Free</h1>
        <span class="nav-end"></span>
      </div>
    </header>

    <main class="content">
      <p class="address">Chandler, Arizona 85226</p>

      <div class="rating">
        <div class="stars" role="img" aria-label="3.5 stars">
          <svg v-for="(d, i) in stars" :key="i" viewBox="0 0 24 24"><path :d="d" /></svg>
        </div>
        <span class="on">on</span>
        <svg class="yelp" viewBox="0 0 254 120" role="img" aria-label="yelp">
          <text x="5" y="85">yelp</text>
          <circle cx="148" cy="75" r="3" />
          <g class="burst">
            <path d="M154 13L162 9 173 6 175 8V42L173 44 171 42z" />
            <path d="M147 57L148 45 151 43 167 52 169 54 167 56 151 61 148 60z" />
            <path d="M183 50L192 33 195 31 200 34 205 43 203 45 185 52z" />
            <path d="M183 59L185 58 202 64 204 67 197 77 194 78 183 62z" />
            <path d="M159 78L170 63 173 62 175 64 174 83 172 85 161 80z" />
          </g>
        </svg>
      </div>

      <nav class="actions" aria-label="Restaurant actions">
        <button
          v-for="action in actions"
          :key="action.label"
          type="button"
          class="action"
          :class="[action.tone, { short: action.short }]"
        >
          <svg viewBox="0 0 24 24" aria-hidden="true"><path :d="action.icon" /></svg>
          <span>{{ action.label }}</span>
        </button>
      </nav>

      <p class="deal">Call For Deal Details</p>

      <section class="map" aria-label="Map">
        <svg class="map-canvas" viewBox="0 0 2048 1092">
          <defs>
            <filter id="soft" x="-5%" y="-5%" width="110%" height="110%">
              <feGaussianBlur stdDeviation="4" />
            </filter>
            <radialGradient id="hill" cx="45%" cy="35%">
              <stop offset="0" stop-color="#eeecec" />
              <stop offset="1" stop-color="#cfcbcd" />
            </radialGradient>
          </defs>

          <rect width="2048" height="1092" fill="#eeeeef" />
          <path fill="#f6eeef" d="M0 615H680V612H1040L1360 620 1540 614 2048 604V1092H0z" />
          <g class="flecks">
            <path v-for="(s, i) in flecks" :key="i" :transform="tiles[s.tile]" :d="s.d" />
          </g>
          <g fill="#fff5df">
            <path v-for="(s, i) in campus" :key="i" :transform="tiles[s.tile]" :d="s.d" />
          </g>
          <g fill="#cbecce">
            <path v-for="(s, i) in parks" :key="i" :transform="tiles[s.tile]" :d="s.d" />
          </g>
          <g fill="#c4efac">
            <path v-for="(s, i) in greens" :key="i" :transform="tiles[s.tile]" :d="s.d" />
          </g>
          <g fill="#f7f6f6">
            <path v-for="(s, i) in schools" :key="i" :transform="tiles[s.tile]" :d="s.d" />
          </g>
          <path :transform="tiles.ne" fill="#efebee" d="M1058 380H1118V1445H1058z" />
          <path :transform="tiles.n" fill="#c4ebc6" d="M413 977H665V1132H310z" />
          <path :transform="tiles.n" fill="#d0efd0" d="M460 1045L520 985Q560 1040 530 1108zM380 1055l30-20 30 25-25 30zM415 1000l35-18 30 20-30 35z" />
          <g class="shades" filter="url(#soft)">
            <path v-for="(s, i) in shades" :key="i" :transform="tiles[s.tile]" :stroke-width="s.w" :d="s.d" />
          </g>
          <g fill="#aadaff">
            <path v-for="(s, i) in lakes" :key="i" :transform="tiles[s.tile]" :d="s.d" />
          </g>
          <g class="lines contour">
            <path v-for="(s, i) in contours" :key="i" :transform="tiles[s.tile]" :d="s.d" />
          </g>
          <g class="lines faint">
            <path v-for="(s, i) in faintContours" :key="i" :transform="tiles[s.tile]" :d="s.d" />
          </g>
          <g class="lines canal">
            <path v-for="(s, i) in canals" :key="i" :transform="tiles[s.tile]" :stroke-width="s.w" :d="s.d" />
          </g>
          <g class="lines road">
            <path v-for="(s, i) in localRoads" :key="i" :transform="tiles[s.tile]" :stroke-width="s.w" :d="s.d" />
          </g>
          <g class="lines rail">
            <path v-for="(s, i) in railways" :key="i" :transform="tiles[s.tile]" :d="s.d" />
          </g>
          <circle cx="168" cy="923" r="18" fill="url(#hill)" />
          <g class="lines casing">
            <path v-for="(s, i) in freeways" :key="i" :transform="tiles[s.tile]" :stroke-width="s.w + 3" :d="s.d" />
          </g>
          <g class="lines road">
            <path v-for="(s, i) in mainRoads" :key="i" :transform="tiles[s.tile]" :stroke-width="s.w" :d="s.d" />
          </g>
          <g class="lines road">
            <path v-for="(s, i) in freeways" :key="i" :transform="tiles[s.tile]" :stroke-width="s.w" :d="s.d" />
          </g>

          <g class="height-label">
            <text transform="translate(293 391) rotate(8)">-1200'</text>
            <text x="174" y="129">1200</text>
          </g>

          <g class="street">
            <text x="652" y="127">W Chandler Blvd</text>
            <text transform="translate(493 311) rotate(-90)">N 56th St</text>
            <text transform="translate(492 604) rotate(-90)">S 56th St</text>
            <text transform="translate(993 449) rotate(-90)">S Kyrene Rd</text>
            <text class="fwy" transform="translate(872 559) rotate(9)">Santan Fwy</text>
            <text class="fwy" transform="translate(1548 603) rotate(-1)">Santan Fwy</text>
            <text class="fwy" transform="translate(404 1062) rotate(60)">Maricopa Fwy</text>
          </g>

          <g class="area">
            <text v-for="label in areaLabels" :key="label.lines[0]" :y="label.y">
              <tspan v-for="(line, i) in label.lines" :key="line" :x="label.x" :dy="i ? 42 : 0">{{ line }}</tspan>
            </text>
          </g>

          <text class="poi" x="1003" y="34">Intel - Chandler Campus</text>
          <path fill="#7c9eb2" d="M1370 46Q1367 36 1359 29Q1352 22 1352 13A18 18 0 0 1 1388 13Q1388 22 1381 29Q1373 36 1370 46z" />
          <circle cx="1370" cy="15" r="7" fill="#fff" />

          <g v-for="s in stateShields" :key="s.x" class="state-shield" :transform="`translate(${s.x} ${s.y})`">
            <rect x="1" y="1" width="51" height="33" rx="13" />
            <text x="26" y="25">202</text>
          </g>

          <g v-for="s in interstateShields" :key="s.x" class="interstate" :transform="`translate(${s.x} ${s.y})`">
            <path fill="#fff" d="M0 0H35V22Q34 38 17 44Q0 38-1 22z" />
            <path fill="#d95c58" d="M3 1Q6 2 9 0 14 4 17 0 20 4 25 0 28 2 31 1L33 8H1z" />
            <path fill="#3474c8" d="M0 11H34V20Q35 36 17 42Q-1 36 0 20z" />
            <text x="17" y="31">10</text>
          </g>

          <g v-for="p in pins" :key="p.x" :transform="`translate(${p.x} ${p.y})`">
            <path
              :fill="p.fill"
              class="pin"
              d="M0 96Q-3 96-3 91Q-5 76-18 56Q-30 40-30 29A30 29 0 0 1 30 29Q30 40 18 56Q5 76 3 91Q3 96 0 96z"
            />
            <circle cy="30" r="10" :fill="p.dot" />
          </g>

          <text class="google" x="16" y="1063"><tspan fill="#4285f4">G</tspan><tspan fill="#ea4335">o</tspan><tspan fill="#fbbc05">o</tspan><tspan fill="#4285f4">g</tspan><tspan fill="#34a853">l</tspan><tspan fill="#ea4335">e</tspan></text>
          <text class="copyright" x="2036" y="1087">©2019 Google</text>
        </svg>
        <button class="locate" type="button" aria-label="My location">
          <svg viewBox="0 0 24 24" aria-hidden="true">
            <path
              d="M12 8c-2.210 0-4 1.790-4 4s1.790 4 4 4 4-1.790 4-4-1.790-4-4-4zm8.940 3A8.994 8.994 0 0 0 13 3.060V1h-2v2.060A8.994 8.994 0 0 0 3.060 11H1v2h2.060A8.994 8.994 0 0 0 11 20.940V23h2v-2.060A8.994 8.994 0 0 0 20.940 13H23v-2h-2.060zM12 19c-3.870 0-7-3.130-7-7s3.130-7 7-7 7 3.130 7 7-3.130 7-7 7z"
            />
          </svg>
        </button>
      </section>
    </main>
  </div>
</template>

<style>
body {
  background: #fafafa;
}
</style>

<style scoped>
.page {
  display: flex;
  flex-direction: column;
  font-family: Inter, "Liberation Sans", sans-serif;
  color: #000;
}

h1,
p {
  margin: 0;
}

button {
  border: 0;
  padding: 0;
  background: none;
  font: inherit;
  color: inherit;
}

svg {
  display: block;
}

.app-bar {
  position: relative;
  z-index: 1;
  background: #f5af1d;
  color: #fff;
  box-shadow: 0 2px 10px rgba(0, 0, 0, 0.4);
}

.status {
  display: flex;
  justify-content: space-between;
  height: 48px;
  padding: 0 11px 0 14px;
  font-size: 30px;
}

.status-side {
  display: flex;
  align-items: center;
  gap: 26px;
}

.status-right {
  gap: 9px;
}

.status svg,
.back svg {
  fill: #fff;
}

.wifi {
  width: 34px;
  height: 26px;
}

.battery {
  width: 66px;
  height: 30px;
}

.battery .battery-shell {
  fill: none;
  stroke: #fff;
  stroke-opacity: 0.4;
  stroke-width: 2;
}

.battery-nub {
  fill-opacity: 0.5;
}

.nav {
  display: grid;
  grid-template-columns: 112px 1fr 112px;
  align-items: center;
  height: 139px;
}

.back {
  padding-left: 47px;
}

.back svg {
  width: 44px;
  height: 30px;
}

h1 {
  text-align: center;
  font-size: 48px;
  font-weight: 600;
}

.content {
  background: #fff;
  padding-bottom: 55px;
}

.address {
  font-size: 82px;
  line-height: 56px;
  text-align: center;
  color: #212121;
}

.rating {
  display: flex;
  align-items: center;
  justify-content: center;
  gap: 44px;
  padding: 67px 0 27px;
  border-bottom: 3px solid #acacac;
}

.stars {
  display: flex;
}

.stars svg {
  width: 59px;
  height: 59px;
}

.on {
  font-size: 82px;
  line-height: 96px;
}

.yelp {
  width: 254px;
  height: 120px;
}

.yelp text {
  font: bold 74px Roboto, sans-serif;
  stroke: #000;
  stroke-width: 1;
  stroke-linejoin: round;
}

.burst {
  fill: #d32323;
  stroke: #d32323;
  stroke-width: 3;
  stroke-linejoin: round;
}

.actions {
  display: flex;
  flex-direction: column;
}

.action {
  display: flex;
  align-items: center;
  gap: 204px;
  height: 199px;
  padding-left: 101px;
  border-bottom: 3px solid #acacac;
  text-align: left;
  font-size: 82px;
  font-weight: 500;
}

.action svg {
  width: 59px;
  height: 59px;
  fill: #212121;
}

.action.short {
  height: 189px;
}

.action.strong svg {
  fill: #000;
}

.action.muted {
  color: #9e9e9e;
}

.action.muted svg {
  fill: #9e9e9e;
}

.deal {
  padding: 42px 0;
  border-bottom: 3px solid #acacac;
  font-size: 39px;
  line-height: 49px;
  text-align: center;
  color: #212121;
}

.map {
  position: relative;
}

.map-canvas {
  width: 100%;
  height: auto;
}

.lines path {
  fill: none;
  vector-effect: non-scaling-stroke;
  stroke-linejoin: round;
}

.road {
  stroke: #fff;
}

.casing {
  stroke: #e9e8ee;
}

.canal {
  stroke: #aadaff;
}

.contour {
  stroke: #c2bfc0;
  stroke-width: 2;
}

.faint {
  stroke: #dddddf;
  stroke-width: 2;
}

.rail {
  stroke: #d3d8d8;
  stroke-width: 2;
}

.shades path {
  fill: none;
  stroke: #b4b4b8;
  stroke-opacity: 0.45;
  stroke-linecap: round;
  vector-effect: non-scaling-stroke;
}

.flecks path {
  fill: none;
  stroke: #f1ecee;
  stroke-width: 8;
  stroke-linecap: round;
  vector-effect: non-scaling-stroke;
}

.map-canvas text {
  paint-order: stroke;
  stroke-linejoin: round;
}

.street {
  fill: #6b4a42;
  stroke: #fff;
  stroke-width: 4;
  font-size: 23px;
  font-weight: 500;
}

.street .fwy {
  font-size: 26px;
}

.area {
  fill: #7b8da8;
  stroke: #f3f3f4;
  stroke-width: 5;
  font-size: 33px;
  font-weight: 500;
  letter-spacing: 6px;
  text-anchor: middle;
}

.poi {
  fill: #66808d;
  stroke: #f3f3f4;
  stroke-width: 4;
  font-size: 29px;
}

.height-label {
  fill: #aeabac;
  font-size: 15px;
}

.state-shield rect {
  fill: #fff;
  stroke: #5a605e;
  stroke-width: 2;
}

.state-shield text {
  fill: #444;
  font-size: 20px;
  text-anchor: middle;
}

.interstate text {
  fill: #fff;
  font-size: 20px;
  text-anchor: middle;
}

.pin {
  stroke: #fff;
  stroke-width: 2;
}

.google {
  stroke: #fff;
  stroke-width: 5;
  font: 700 42px Lato, sans-serif;
}

.copyright {
  fill: #4d4d4d;
  stroke: #f8f3f4;
  stroke-width: 3;
  font-size: 23px;
  text-anchor: end;
}

.locate {
  position: absolute;
  right: 23px;
  bottom: 51px;
  display: grid;
  place-items: center;
  width: 139px;
  height: 139px;
  border-radius: 50%;
  background: #fff;
  box-shadow: 0 4px 10px rgba(0, 0, 0, 0.35);
}

.locate svg {
  width: 59px;
  height: 59px;
  fill: #616161;
}
</style>
